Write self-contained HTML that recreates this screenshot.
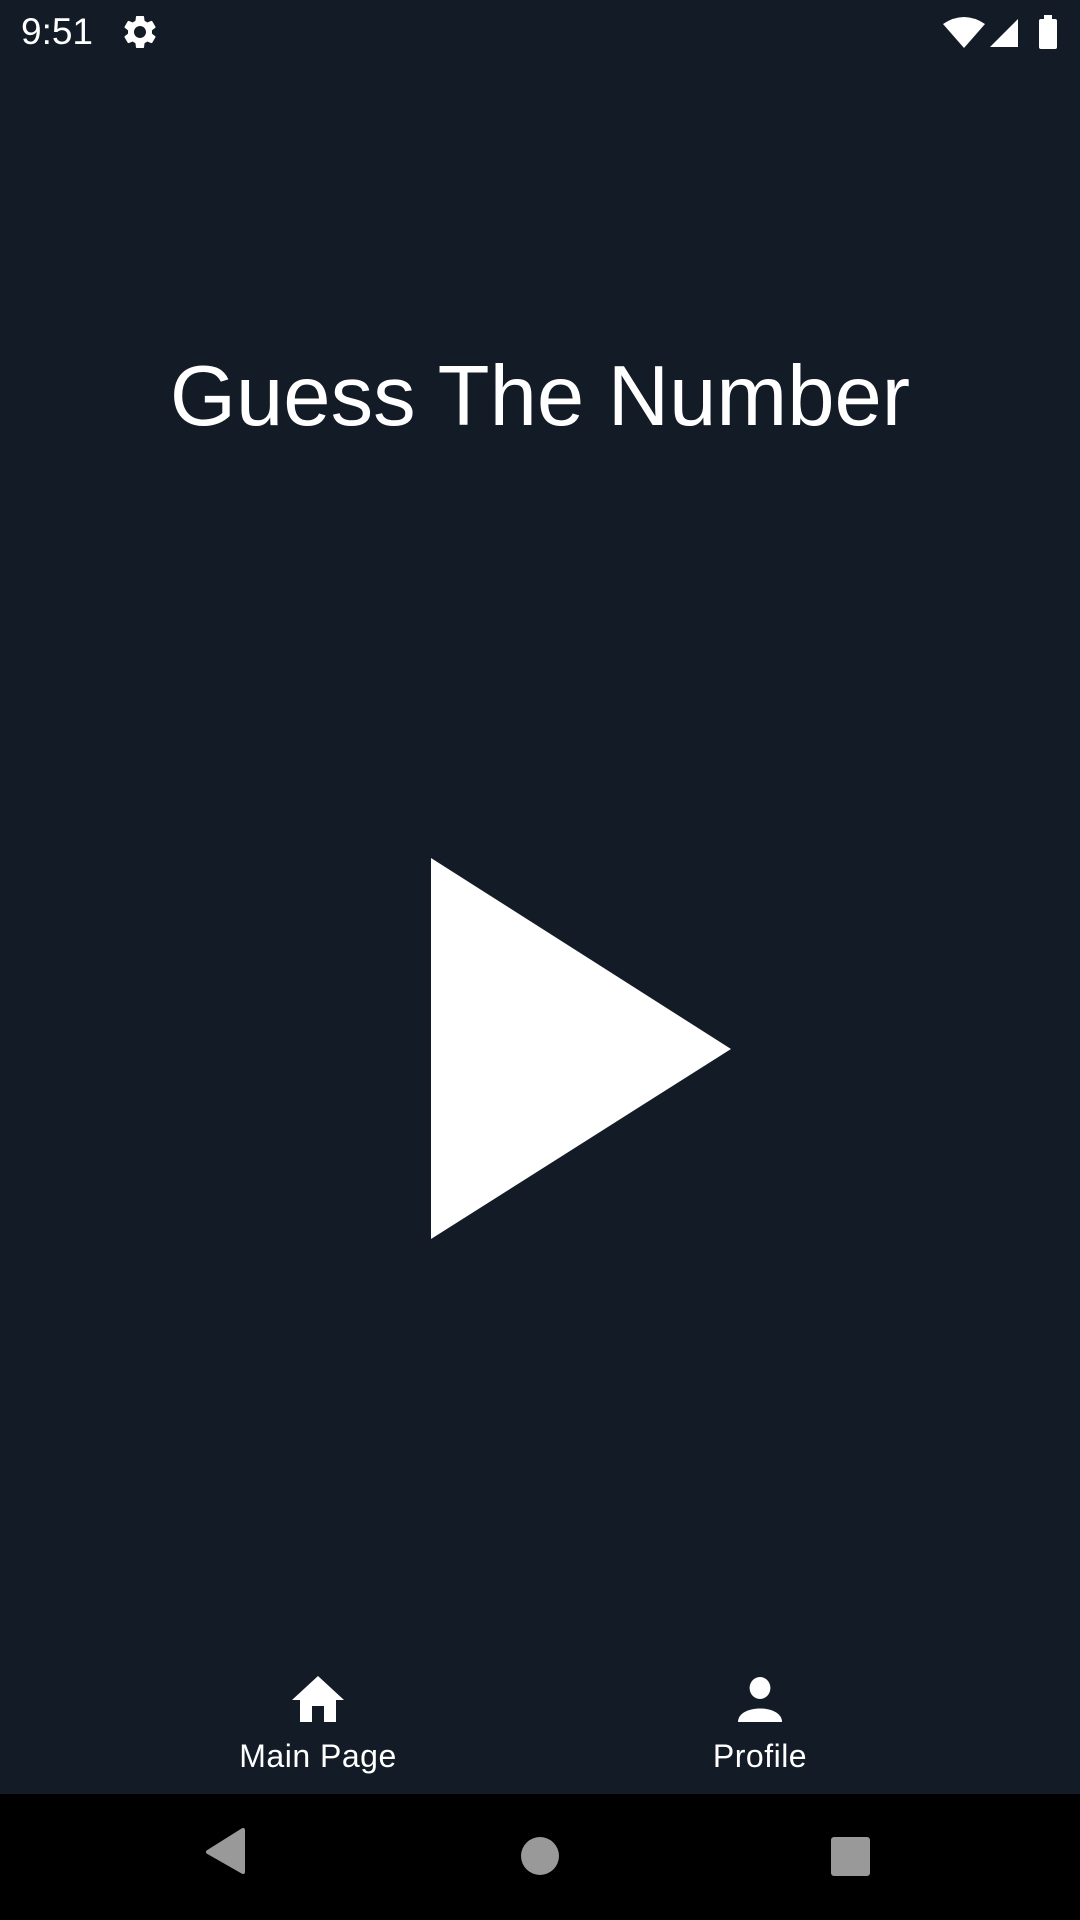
<!DOCTYPE html>
<html><head><meta charset="utf-8"><style>
html,body{margin:0;padding:0;}
body{width:1080px;height:1920px;background:#131c26;position:relative;overflow:hidden;font-family:"Liberation Sans",sans-serif;color:#fff;}
.abs{position:absolute;}
</style></head><body>
<div class="abs" style="left:21px;top:10px;font-size:37px;line-height:44px;">9:51</div>
<svg class="abs" style="left:120px;top:12px" width="40" height="40" viewBox="0 0 24 24"><path fill="#fff" d="M19.14 12.94c.04-.3.06-.61.06-.94s-.02-.64-.07-.94l2.030-1.58a.49.49 0 0 0 .12-.61l-1.92-3.32a.49.49 0 0 0-.59-.22l-2.39.96c-.5-.38-1.03-.7-1.62-.94l-.36-2.54a.48.48 0 0 0-.48-.41h-3.84c-.24 0-.43.17-.47.41l-.36 2.54c-.59.24-1.130.57-1.62.94l-2.39-.96a.48.48 0 0 0-.59.22L2.74 8.87c-.12.21-.08.47.12.61l2.03 1.58c-.05.3-.09.63-.09.94s.02.64.07.94l-2.03 1.58a.49.49 0 0 0-.12.61l1.92 3.32c.12.22.37.29.59.22l2.39-.96c.5.38 1.03.7 1.62.94l.36 2.54c.05.24.24.41.48.41h3.84c.24 0 .44-.17.47-.41l.36-2.54c.59-.24 1.13-.56 1.62-.94l2.39.96c.22.08.47 0 .59-.22l1.92-3.32c.12-.22.07-.47-.12-.61l-2.01-1.58zM12 15.6c-1.98 0-3.6-1.62-3.6-3.6s1.62-3.6 3.6-3.6 3.6 1.62 3.6 3.6-1.62 3.6-3.6 3.6z"/></svg>
<svg class="abs" style="left:940px;top:12px" width="130" height="40" viewBox="0 0 130 40">
<path fill="#fff" d="M3 12 Q24 -2 45 12 L24 36 Z"/>
<path fill="#fff" d="M50 35 L78 7 L78 35 Z"/>
<rect x="99" y="7" width="18" height="30" rx="2" fill="#fff"/><rect x="104" y="3" width="8" height="5" fill="#fff"/>
</svg>
<div class="abs" style="left:0;width:1080px;top:342px;text-align:center;font-size:85px;line-height:110px;">Guess The Number</div>
<svg class="abs" style="left:0;top:0" width="1080" height="1920"><polygon points="431,858 731,1049 431,1239" fill="#fff"/></svg>
<svg class="abs" style="left:290px;top:1674px" width="56" height="50" viewBox="0 0 28 25"><path fill="#fff" d="M14 1 L27 13 L23 13 L23 24 L17 24 L17 16 L11 16 L11 24 L5 24 L5 13 L1 13 Z"/></svg>
<svg class="abs" style="left:736px;top:1674px" width="48" height="50" viewBox="0 0 24 25"><ellipse cx="12" cy="7" rx="5.2" ry="5.5" fill="#fff"/><path fill="#fff" d="M1 24 C1 15 23 15 23 24 Z"/></svg>
<div class="abs" style="left:168px;width:300px;top:1738px;text-align:center;font-size:32px;letter-spacing:0.5px;">Main Page</div>
<div class="abs" style="left:610px;width:300px;top:1738px;text-align:center;font-size:32px;letter-spacing:0.5px;">Profile</div>
<div class="abs" style="left:0;top:1794px;width:1080px;height:126px;background:#000;"></div>
<svg class="abs" style="left:0;top:1794px" width="1080" height="126"><path d="M243 36 L243 78 L208 58 Z" fill="#999" stroke="#999" stroke-width="4" stroke-linejoin="round"/><circle cx="540" cy="62" r="19" fill="#999"/><rect x="831" y="43" width="39" height="39" rx="3" fill="#999"/></svg>
</body></html>
